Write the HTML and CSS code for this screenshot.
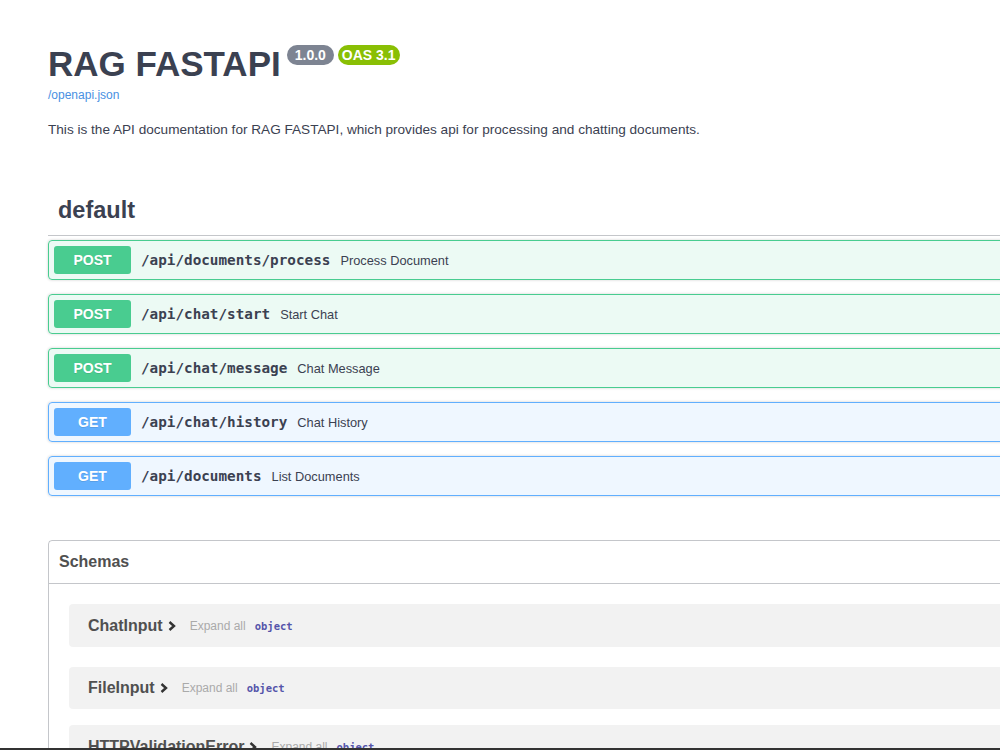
FILE: index.html
```html
<!DOCTYPE html>
<html lang="en">
<head>
    <meta charset="UTF-8">
    <meta name="viewport" content="width=device-width, initial-scale=1.0">
    <title>RAG FASTAPI - Swagger UI</title>
    <link rel="stylesheet" href="styles.css">
</head>
<body>
    <div class="wrapper">
        <div class="info">
            <h2 class="title">
                <span>RAG FASTAPI</span>
                <span class="badge version">1.0.0</span>
                <span class="badge oas">OAS 3.1</span>
            </h2>
            <a class="spec-link" href="#">/openapi.json</a>
            <p class="description">This is the API documentation for RAG FASTAPI, which provides api for processing and chatting documents.</p>
        </div>

        <div class="tag-section">
            <h3 class="tag-title">default</h3>

            <div class="opblock post">
                <span class="method">POST</span>
                <span class="path">/api/documents/process</span>
                <span class="summary">Process Document</span>
            </div>
            <div class="opblock post">
                <span class="method">POST</span>
                <span class="path">/api/chat/start</span>
                <span class="summary">Start Chat</span>
            </div>
            <div class="opblock post">
                <span class="method">POST</span>
                <span class="path">/api/chat/message</span>
                <span class="summary">Chat Message</span>
            </div>
            <div class="opblock get">
                <span class="method">GET</span>
                <span class="path">/api/chat/history</span>
                <span class="summary">Chat History</span>
            </div>
            <div class="opblock get">
                <span class="method">GET</span>
                <span class="path">/api/documents</span>
                <span class="summary">List Documents</span>
            </div>
        </div>

        <div class="models">
            <h4 class="models-title">Schemas</h4>
            <div class="models-body">
                <div class="model-container">
                    <span class="model-title">ChatInput</span>
                    <svg class="chevron" width="10" height="12" viewBox="0 0 10 12"><polyline points="2.5,2 7,6 2.5,10" fill="none" stroke="#333" stroke-width="2.4"/></svg>
                    <span class="expand">Expand all</span>
                    <span class="prop-type">object</span>
                </div>
                <div class="model-container">
                    <span class="model-title">FileInput</span>
                    <svg class="chevron" width="10" height="12" viewBox="0 0 10 12"><polyline points="2.5,2 7,6 2.5,10" fill="none" stroke="#333" stroke-width="2.4"/></svg>
                    <span class="expand">Expand all</span>
                    <span class="prop-type">object</span>
                </div>
                <div class="model-container">
                    <span class="model-title">HTTPValidationError</span>
                    <svg class="chevron" width="10" height="12" viewBox="0 0 10 12"><polyline points="2.5,2 7,6 2.5,10" fill="none" stroke="#333" stroke-width="2.4"/></svg>
                    <span class="expand">Expand all</span>
                    <span class="prop-type">object</span>
                </div>
            </div>
        </div>
    </div>
    <div class="screen-edge"></div>
</body>
</html>
```

FILE: styles.css
```css
html, body {
    overflow: hidden;
}
body {
    margin: 0;
    font-family: 'Liberation Sans', Arial, sans-serif;
    color: #3b4151;
    background-color: #fff;
}
.wrapper {
    width: 1400px;
    padding-left: 48px;
}
.info {
    padding-top: 43px;
}
.title {
    display: flex;
    align-items: flex-start;
    margin: 0;
    font-size: 35px;
    line-height: 42px;
    font-weight: bold;
    color: #3b4151;
}
.badge {
    margin-top: 2px;
    margin-left: 4px;
    padding: 2px 4px;
    border-radius: 57px;
    font-size: 14px;
    line-height: 16px;
    font-weight: bold;
    color: #fff;
}
.badge.version {
    margin-left: 6px;
    padding: 2px 8px;
    background-color: #7d8492;
}
.badge.oas {
    background-color: #89bf04;
}
.spec-link {
    display: inline-block;
    margin-top: 3px;
    font-size: 12px;
    color: #4990e2;
    text-decoration: none;
}
.description {
    margin: 18px 0 0;
    font-size: 13.6px;
    line-height: 18px;
}
.tag-section {
    margin-top: 46px;
}
.tag-title {
    margin: 0 0 4px;
    padding: 10px 20px 10px 10px;
    font-size: 23.5px;
    line-height: 30px;
    font-weight: bold;
    border-bottom: 1px solid rgba(59, 65, 81, 0.3);
}
.opblock {
    display: flex;
    align-items: center;
    height: 28px;
    padding: 5px;
    margin-bottom: 14px;
    border: 1px solid;
    border-radius: 4px;
    box-shadow: 0 0 3px rgba(0, 0, 0, 0.19);
}
.opblock.post {
    border-color: #49cc90;
    background-color: rgba(73, 204, 144, 0.1);
}
.opblock.get {
    border-color: #61affe;
    background-color: rgba(97, 175, 254, 0.1);
}
.method {
    width: 77px;
    height: 28px;
    line-height: 28px;
    text-align: center;
    border-radius: 3px;
    font-size: 14px;
    font-weight: bold;
    color: #fff;
    text-shadow: 0 1px 0 rgba(0, 0, 0, 0.1);
}
.post .method {
    background-color: #49cc90;
}
.get .method {
    background-color: #61affe;
}
.path {
    padding: 0 10px;
    font-family: 'DejaVu Sans Mono', monospace;
    font-size: 14.3px;
    font-weight: bold;
    color: #3b4151;
}
.summary {
    font-size: 12.8px;
    color: #3b4151;
}
.models {
    margin-top: 44px;
    border: 1px solid rgba(59, 65, 81, 0.3);
    border-radius: 4px;
}
.models-title {
    margin: 0;
    padding: 10px 20px 10px 10px;
    font-size: 16px;
    line-height: 22px;
    font-weight: bold;
    color: #505050;
    border-bottom: 1px solid rgba(59, 65, 81, 0.3);
}
.models-body {
    padding-top: 20px;
}
.model-container {
    display: flex;
    align-items: center;
    height: 43px;
    margin: 0 20px 20px;
    padding: 0 19px;
    border-radius: 4px;
    background-color: rgba(0, 0, 0, 0.05);
}
.model-container:nth-child(2) {
    height: 42px;
    margin-bottom: 16px;
}
.model-title {
    font-size: 16px;
    font-weight: bold;
    color: #505050;
}
.chevron {
    margin-left: 4px;
}
.expand {
    margin-left: 13px;
    font-size: 12px;
    color: #aaa;
}
.prop-type {
    margin-left: 9px;
    font-family: 'DejaVu Sans Mono', monospace;
    font-size: 10.5px;
    font-weight: bold;
    color: #55a;
}
.screen-edge {
    position: fixed;
    left: 0;
    right: 0;
    bottom: 0;
    height: 2px;
    background-color: #333;
}
```
